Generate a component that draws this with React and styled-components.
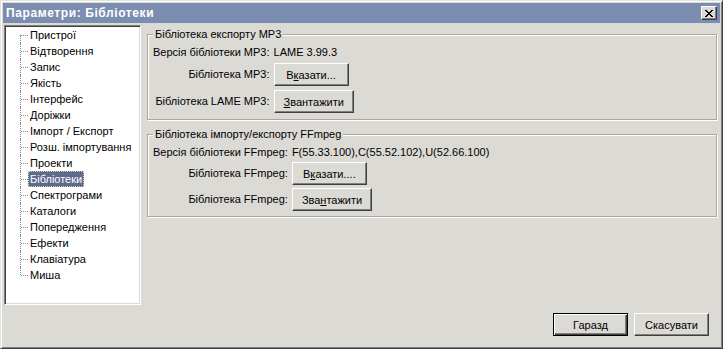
import React from 'react';
import styled, { createGlobalStyle } from 'styled-components';

const FONT = '"Liberation Sans", Arial, sans-serif';

const Global = createGlobalStyle`
  html, body { margin: 0; padding: 0; background: #dcdad5; }
  body { font-family: ${FONT}; font-size: 11px; }
  #root { width: 723px; height: 349px; }
`;

const Window = styled.div`
  box-sizing: border-box;
  width: 723px;
  height: 349px;
  background: #dcdad5;
  border: 1px solid;
  border-color: #e4e2dd #404040 #404040 #e4e2dd;
  box-shadow: inset 1px 1px #ffffff, inset -1px -1px #808080;
  padding: 2px;
  display: flex;
  flex-direction: column;
  color: #000;
  font-family: ${FONT};
  font-size: 11px;
`;

const TitleBar = styled.div`
  height: 20px;
  flex: none;
  background: #7b8db0;
  display: flex;
  align-items: center;
  justify-content: space-between;
  padding: 0 3px 0 3px;
`;

const Title = styled.span`
  color: #fff;
  font-weight: bold;
  font-size: 12px;
  letter-spacing: 0.6px;
`;

const CloseButton = styled.div`
  box-sizing: border-box;
  width: 16px;
  height: 14px;
  background: #dcdad5;
  border: 1px solid;
  border-color: #ffffff #404040 #404040 #ffffff;
  box-shadow: inset -1px -1px #808080;
  display: flex;
  align-items: center;
  justify-content: center;
`;

const Content = styled.div`
  flex: 1;
  display: flex;
  flex-direction: column;
  padding: 2px 3px 0 1px;
`;

const MainRow = styled.div`
  display: flex;
  gap: 6px;
  height: 280px;
`;

const TreePanel = styled.div`
  box-sizing: border-box;
  width: 137px;
  flex: none;
  background: #fff;
  border: 1px solid;
  border-color: #808080 #ffffff #ffffff #808080;
  box-shadow: inset 1px 1px #404040, inset -1px -1px #dcdad5;
  padding: 1px;
`;

const TreeRow = styled.div`
  height: 16px;
  display: flex;
  align-items: center;
  padding-left: 14px;
`;

const Connector = styled.span`
  position: relative;
  width: 8px;
  flex: none;
  align-self: stretch;
  &::before {
    content: '';
    position: absolute;
    left: 0;
    top: ${(p) => (p.$first ? '8px' : '0')};
    bottom: ${(p) => (p.$last ? '8px' : '0')};
    border-left: 1px dotted #8a8a8a;
  }
  &::after {
    content: '';
    position: absolute;
    left: 1px;
    top: 8px;
    width: 7px;
    border-top: 1px dotted #8a8a8a;
  }
`;

const TreeLabel = styled.span`
  box-sizing: border-box;
  height: 16px;
  line-height: 14px;
  padding: 0 1px;
  border: 1px ${(p) => (p.$selected ? 'dotted #d8d0b0' : 'solid transparent')};
  background: ${(p) => (p.$selected ? '#5f6b8c' : 'transparent')};
  color: ${(p) => (p.$selected ? '#fff' : '#000')};
  white-space: nowrap;
`;

const RightColumn = styled.div`
  flex: 1;
  display: flex;
  flex-direction: column;
`;

const GroupBox = styled.div`
  position: relative;
  margin-top: ${(p) => p.$mt}px;
  border: 1px solid #a9a7a0;
  box-shadow: inset 1px 1px #ffffff, 1px 1px #ffffff;
  padding: 11px 5px ${(p) => p.$pb}px 5px;
`;

const Legend = styled.span`
  position: absolute;
  top: -7px;
  left: 5px;
  padding: 0 2px;
  line-height: 13px;
  background: #dcdad5;
  white-space: nowrap;
`;

const FormGrid = styled.div`
  display: grid;
  grid-template-columns: auto 1fr;
  column-gap: 4px;
  row-gap: ${(p) => p.$gap}px;
  align-items: center;
`;

const Label = styled.span`
  justify-self: end;
  line-height: 13px;
  white-space: nowrap;
`;

const Value = styled.span`
  line-height: 13px;
  white-space: nowrap;
`;

const Button = styled.button`
  box-sizing: border-box;
  justify-self: start;
  height: 23px;
  min-width: 75px;
  padding: 0 9px;
  font-family: ${FONT};
  font-size: 11px;
  color: #000;
  background: #dcdad5;
  border: 1px solid;
  border-color: ${(p) => (p.$default ? '#000 #000 #000 #000' : '#ffffff #404040 #404040 #ffffff')};
  box-shadow: ${(p) =>
    p.$default
      ? 'inset 1px 1px #ffffff, inset -1px -1px #404040, inset -2px -2px #808080'
      : 'inset -1px -1px #808080'};
  u { text-decoration: underline; text-underline-offset: 1px; }
`;

const Footer = styled.div`
  display: flex;
  justify-content: flex-end;
  gap: 6px;
  padding: 8px 8px 0 0;
`;

const CloseIcon = () => (
  <svg width="8" height="7" viewBox="0 0 8 7" shapeRendering="crispEdges">
    <path d="M0 0h2v1h-2zM6 0h2v1h-2zM1 1h2v1h-2zM5 1h2v1h-2zM2 2h4v1h-4zM3 3h2v1h-2zM2 4h4v1h-4zM1 5h2v1h-2zM5 5h2v1h-2zM0 6h2v1h-2zM6 6h2v1h-2z" fill="#000" />
  </svg>
);

const items = [
  'Пристрої',
  'Відтворення',
  'Запис',
  'Якість',
  'Інтерфейс',
  'Доріжки',
  'Імпорт / Експорт',
  'Розш. імпортування',
  'Проекти',
  'Бібліотеки',
  'Спектрограми',
  'Каталоги',
  'Попередження',
  'Ефекти',
  'Клавіатура',
  'Миша',
];

export default function App() {
  return (
    <>
      <Global />
      <Window>
        <TitleBar>
          <Title>Параметри: Бібліотеки</Title>
          <CloseButton>
            <CloseIcon />
          </CloseButton>
        </TitleBar>
        <Content>
          <MainRow>
            <TreePanel>
              {items.map((it, i) => (
                <TreeRow key={it}>
                  <Connector $first={i === 0} $last={i === items.length - 1} />
                  <TreeLabel $selected={it === 'Бібліотеки'}>{it}</TreeLabel>
                </TreeRow>
              ))}
            </TreePanel>
            <RightColumn>
              <GroupBox $mt={9} $pb={6}>
                <Legend>Бібліотека експорту MP3</Legend>
                <FormGrid $gap={4}>
                  <Label>Версія бібліотеки MP3:</Label>
                  <Value>LAME 3.99.3</Value>
                  <Label>Бібліотека MP3:</Label>
                  <Button>
                    В<u>к</u>азати...
                  </Button>
                  <Label>Бібліотека LAME MP3:</Label>
                  <Button>
                    <u>З</u>вантажити
                  </Button>
                </FormGrid>
              </GroupBox>
              <GroupBox $mt={14} $pb={5}>
                <Legend>Бібліотека імпорту/експорту FFmpeg</Legend>
                <FormGrid $gap={3}>
                  <Label>Версія бібліотеки FFmpeg:</Label>
                  <Value>F(55.33.100),C(55.52.102),U(52.66.100)</Value>
                  <Label>Бібліотека FFmpeg:</Label>
                  <Button>
                    В<u>к</u>азати....
                  </Button>
                  <Label>Бібліотека FFmpeg:</Label>
                  <Button>
                    Зва<u>н</u>тажити
                  </Button>
                </FormGrid>
              </GroupBox>
            </RightColumn>
          </MainRow>
          <Footer>
            <Button $default>Гаразд</Button>
            <Button>Скасувати</Button>
          </Footer>
        </Content>
      </Window>
    </>
  );
}
